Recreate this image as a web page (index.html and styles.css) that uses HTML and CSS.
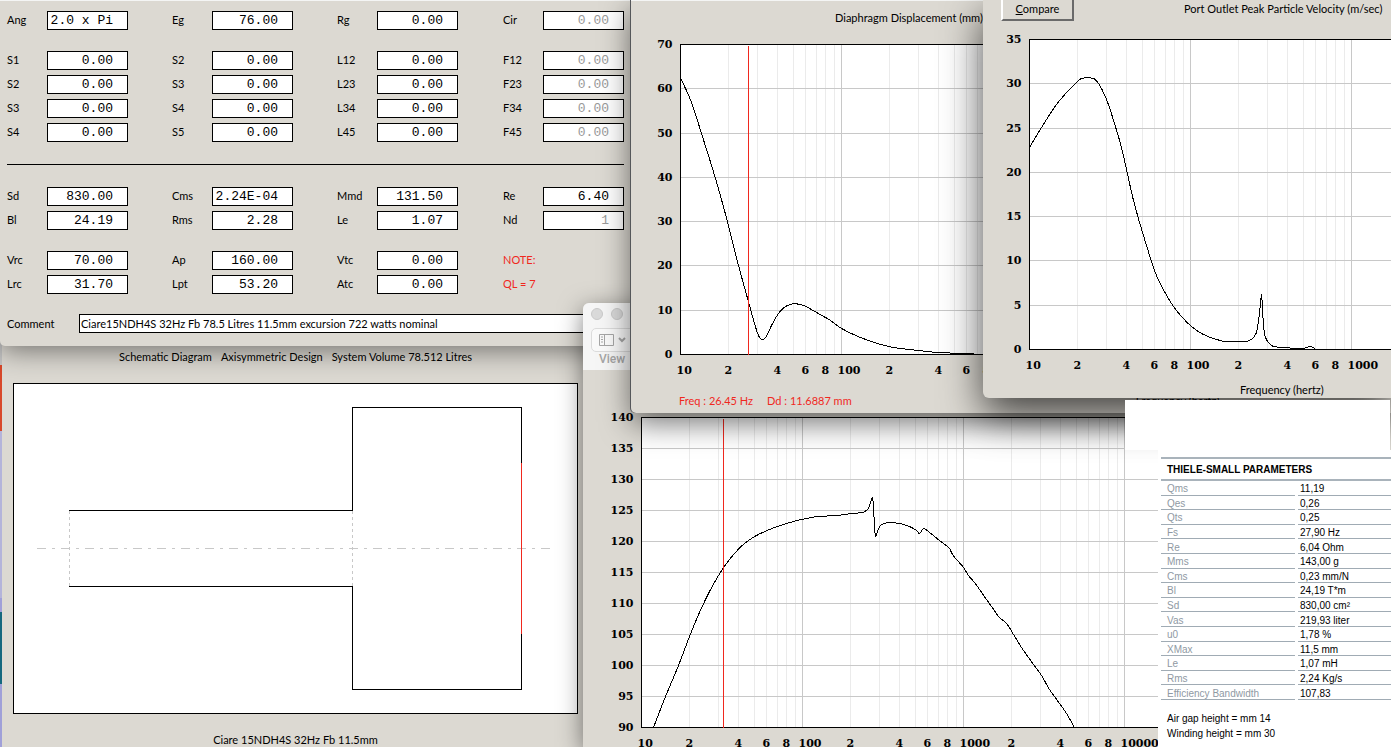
FILE: index.html
```
<!DOCTYPE html>
<html lang="en">

<head>
    <meta charset="UTF-8">
    <meta name="viewport" content="width=device-width, initial-scale=1.0">
    <title>Loudspeaker Simulation</title>
    <link rel="stylesheet" href="styles.css">
</head>

<body>

    <main class="desktop">

        <!-- Schematic diagram -->
        <section class="window schematic">
            <header class="schematic-title">
                <span>Schematic Diagram</span>
                <span>Axisymmetric Design</span>
                <span>System Volume 78.512 Litres</span>
            </header>
            <svg class="schematic-canvas" viewBox="0 0 563 329" shape-rendering="crispEdges">
                <path class="guide axis" d="M23 164.5H536" />
                <path class="guide" d="M55.5 127V202M338.5 127V202" />
                <path class="wall" d="M55 126.500H338.500V23.500H507.500V79M55 202.500H338.500V305.500H507.500V250" />
                <path class="driver" d="M507.500 79V250" />
            </svg>
            <p class="schematic-caption">Ciare 15NDH4S 32Hz Fb 11.5mm</p>
        </section>

        <!-- Input parameters -->
        <form class="window params">
            <div class="field-grid">
                <div class="field"><label for="ang">Ang</label><input type="text" id="ang" value="2.0 x Pi"></div>
                <div class="field"><label for="eg">Eg</label><input type="text" id="eg" value="76.00"></div>
                <div class="field"><label for="rg">Rg</label><input type="text" id="rg" value="0.00"></div>
                <div class="field"><label for="cir">Cir</label><input type="text" id="cir" value="0.00" disabled></div>
            </div>
            <div class="field-grid">
                <div class="field"><label for="s1">S1</label><input type="text" id="s1" value="0.00"></div>
                <div class="field"><label for="s2">S2</label><input type="text" id="s2" value="0.00"></div>
                <div class="field"><label for="l12">L12</label><input type="text" id="l12" value="0.00"></div>
                <div class="field"><label for="f12">F12</label><input type="text" id="f12" value="0.00" disabled></div>
                <div class="field"><label for="s2b">S2</label><input type="text" id="s2b" value="0.00"></div>
                <div class="field"><label for="s3">S3</label><input type="text" id="s3" value="0.00"></div>
                <div class="field"><label for="l23">L23</label><input type="text" id="l23" value="0.00"></div>
                <div class="field"><label for="f23">F23</label><input type="text" id="f23" value="0.00" disabled></div>
                <div class="field"><label for="s3b">S3</label><input type="text" id="s3b" value="0.00"></div>
                <div class="field"><label for="s4">S4</label><input type="text" id="s4" value="0.00"></div>
                <div class="field"><label for="l34">L34</label><input type="text" id="l34" value="0.00"></div>
                <div class="field"><label for="f34">F34</label><input type="text" id="f34" value="0.00" disabled></div>
                <div class="field"><label for="s4b">S4</label><input type="text" id="s4b" value="0.00"></div>
                <div class="field"><label for="s5">S5</label><input type="text" id="s5" value="0.00"></div>
                <div class="field"><label for="l45">L45</label><input type="text" id="l45" value="0.00"></div>
                <div class="field"><label for="f45">F45</label><input type="text" id="f45" value="0.00" disabled></div>
            </div>
            <hr>
            <div class="field-grid">
                <div class="field"><label for="sd">Sd</label><input type="text" id="sd" value="830.00"></div>
                <div class="field"><label for="cms">Cms</label><input type="text" id="cms" value="2.24E-04"></div>
                <div class="field"><label for="mmd">Mmd</label><input type="text" id="mmd" value="131.50"></div>
                <div class="field"><label for="re">Re</label><input type="text" id="re" value="6.40"></div>
                <div class="field"><label for="bl">Bl</label><input type="text" id="bl" value="24.19"></div>
                <div class="field"><label for="rms">Rms</label><input type="text" id="rms" value="2.28"></div>
                <div class="field"><label for="le">Le</label><input type="text" id="le" value="1.07"></div>
                <div class="field"><label for="nd">Nd</label><input type="text" id="nd" value="1" disabled></div>
            </div>
            <div class="field-grid">
                <div class="field"><label for="vrc">Vrc</label><input type="text" id="vrc" value="70.00"></div>
                <div class="field"><label for="ap">Ap</label><input type="text" id="ap" value="160.00"></div>
                <div class="field"><label for="vtc">Vtc</label><input type="text" id="vtc" value="0.00"></div>
                <div class="field note">NOTE:</div>
                <div class="field"><label for="lrc">Lrc</label><input type="text" id="lrc" value="31.70"></div>
                <div class="field"><label for="lpt">Lpt</label><input type="text" id="lpt" value="53.20"></div>
                <div class="field"><label for="atc">Atc</label><input type="text" id="atc" value="0.00"></div>
                <div class="field note">QL = 7</div>
            </div>
            <div class="comment">
                <label for="comment">Comment</label>
                <input type="text" id="comment" value="Ciare15NDH4S 32Hz Fb 78.5 Litres 11.5mm excursion 722 watts nominal">
            </div>
        </form>

        <!-- Preview window with the SPL chart in front -->
        <section class="window preview">
            <div class="toolbar">
                <div class="lights"><i></i><i></i></div>
                <button type="button" id="view-btn" class="view-btn">
                    <svg width="30" height="14" viewBox="0 0 30 14">
                        <path d="M.5 1.500H14.500V12.500H.5ZM5.500 1.500V12.500M2 4H4M2 6.500H4M2 9H4" />
                        <path class="chevron" d="M20 5L23 8L26 5" />
                    </svg>
                </button>
                <label for="view-btn">View</label>
            </div>
            <svg class="chart" id="spl"></svg>
        </section>

        <!-- Diaphragm displacement -->
        <section class="window displacement">
            <header class="chart-head">
                <h2>Diaphragm Displacement (mm)</h2>
            </header>
            <svg class="chart" id="disp"></svg>
            <footer class="readout">
                <span>Freq : 26.45 Hz</span>
                <span>Dd : 11.6887 mm</span>
                <span class="axis-name">Frequency (hertz)</span>
            </footer>
        </section>

        <!-- Port velocity -->
        <section class="window velocity">
            <header class="chart-head">
                <button type="button" class="compare-btn"><u>C</u>ompare</button>
                <h2>Port Outlet Peak Particle Velocity (m/sec)</h2>
            </header>
            <svg class="chart" id="vel"></svg>
            <footer class="axis-name">Frequency (hertz)</footer>
        </section>

        <div class="blank-note"></div>

        <!-- Driver datasheet -->
        <section class="datasheet">
            <h3>THIELE-SMALL PARAMETERS</h3>
            <table>
                <tr><th>Qms</th><td>11,19</td></tr>
                <tr><th>Qes</th><td>0,26</td></tr>
                <tr><th>Qts</th><td>0,25</td></tr>
                <tr><th>Fs</th><td>27,90 Hz</td></tr>
                <tr><th>Re</th><td>6,04 Ohm</td></tr>
                <tr><th>Mms</th><td>143,00 g</td></tr>
                <tr><th>Cms</th><td>0,23 mm/N</td></tr>
                <tr><th>Bl</th><td>24,19 T*m</td></tr>
                <tr><th>Sd</th><td>830,00 cm²</td></tr>
                <tr><th>Vas</th><td>219,93 liter</td></tr>
                <tr><th>u0</th><td>1,78 %</td></tr>
                <tr><th>XMax</th><td>11,5 mm</td></tr>
                <tr><th>Le</th><td>1,07 mH</td></tr>
                <tr><th>Rms</th><td>2,24 Kg/s</td></tr>
                <tr><th>Efficiency Bandwidth</th><td>107,83</td></tr>
            </table>
            <p>Air gap height = mm 14</p>
            <p>Winding height = mm 30</p>
        </section>

    </main>

    <script>
        var DECADE = 161;
        var HEIGHT = 310;

        function add(svg, name, attrs, text) {
            var el = document.createElementNS('http://www.w3.org/2000/svg', name);
            for (var key in attrs) {
                el.setAttribute(key, attrs[key]);
            }
            if (text !== undefined) {
                el.textContent = text;
            }
            svg.appendChild(el);
        }

        // Monotone cubic through the points, so peaks do not overshoot
        function smoothPath(points) {
            var p = points.split(' ').map(function (s) { return s.split(',').map(Number); });
            var slopes = [];
            var tangents = [];
            var i;
            for (i = 0; i < p.length - 1; i++) {
                slopes.push((p[i + 1][1] - p[i][1]) / (p[i + 1][0] - p[i][0]));
            }
            for (i = 0; i < p.length; i++) {
                var a = slopes[Math.max(i - 1, 0)];
                var b = slopes[Math.min(i, slopes.length - 1)];
                tangents.push(a * b <= 0 ? 0 : 2 * a * b / (a + b));
            }
            var d = 'M' + p[0];
            for (i = 0; i < p.length - 1; i++) {
                var h = (p[i + 1][0] - p[i][0]) / 3;
                d += 'C' + [p[i][0] + h, p[i][1] + h * tangents[i],
                    p[i + 1][0] - h, p[i + 1][1] - h * tangents[i + 1],
                    p[i + 1][0], p[i + 1][1]].join(' ');
            }
            return d;
        }

        // Log frequency axis from 10 Hz, linear vertical axis from min to max
        function drawChart(id, opt) {
            var svg = document.getElementById(id);
            var x0 = opt.left + 0.5;
            var y0 = opt.top + 0.5;
            var width = DECADE * 4;

            add(svg, 'rect', { x: x0, y: y0, width: width, height: HEIGHT, fill: '#fff' });

            for (var d = 0; d < opt.decades; d++) {
                for (var n = 1; n < 10; n++) {
                    var x = x0 + Math.round(DECADE * (d + Math.log10(n)));
                    if (d > 0 || n > 1) {
                        add(svg, 'path', { d: 'M' + x + ' ' + y0 + 'v' + HEIGHT, 'class': n === 1 ? 'major' : 'minor' });
                    }
                    if (n === 1 || n === 2 || n === 4 || n === 6 || n === 8) {
                        var label = n === 1 ? Math.pow(10, d + 1) : n;
                        if (x < svg.clientWidth) {
                            add(svg, 'text', { x: x - 4, y: y0 + HEIGHT + 19, 'class': 'tick' }, label);
                        }
                    }
                }
            }

            var count = (opt.max - opt.min) / opt.step;
            for (var i = 0; i <= count; i++) {
                var y = y0 + Math.round(HEIGHT * i / count);
                if (i > 0 && i < count) {
                    add(svg, 'path', { d: 'M' + x0 + ' ' + y + 'h' + width, 'class': 'major' });
                }
                add(svg, 'text', { x: x0 - 8, y: y + 3, 'class': 'tick tick-y' }, opt.max - i * opt.step);
            }

            add(svg, 'rect', { x: x0, y: y0, width: width, height: HEIGHT, 'class': 'frame' });
            add(svg, 'path', { d: smoothPath(opt.points), 'class': 'curve', transform: 'translate(' + x0 + ' ' + y0 + ')' });
            if (opt.cursor) {
                add(svg, 'path', { d: 'M' + (x0 + opt.cursor) + ' ' + (y0 + 1) + 'v' + (HEIGHT - 1), 'class': 'cursor' });
            }
        }

        drawChart('disp', {
            left: 49, top: 10, min: 0, max: 70, step: 10, decades: 2, cursor: 68,
            points: '0,33 11,58 21,89 35,134 44,166 58,221 69,261 74,279 78,291 80,294 82,295 85,293 91,281 98,269 105,262 110,260 114,259 119,260 123,261 136,268 150,276 161,284 180,293 197,299 213,303 238,306 258,308 283,309 303,310'
        });

        drawChart('vel', {
            left: 46, top: 10, min: 0, max: 35, step: 5, decades: 3,
            points: '0,108 12,88 27,65 39,51 47,43 52,39 58,38 64,39 69,44 77,60 85,84 92,108 97,130 104,161 117,206 127,236 136,254 144,267 152,277 162,287 172,294 184,299 197,302 209,302 217,302 223,299 227,293 229,281 231,264 232,255 233,269 234,286 236,298 239,303 244,307 252,308 274,309 280,307 286,309'
        });

        drawChart('spl', {
            left: 58, top: 47, min: 90, max: 140, step: 5, decades: 4, cursor: 82,
            points: '12,310 24,279 37,248 48,219 58,195 68,174 77,158 85,146 93,136 103,126 115,118 128,112 142,107 160,102 177,99 195,98 210,96 221,95 226,92 228,88 230,82 231,80 232,90 233,109 234,119 237,111 240,107 248,105 258,106 268,109 275,113 278,116 282,111 288,115 298,123 308,131 311,137 322,150 327,158 333,165 345,182 350,189 358,200 365,206 372,217 380,230 392,247 400,258 408,272 413,279 425,296 433,310'
        });
    </script>

</body>

</html>
```
FILE: styles.css
```
* {
    box-sizing: border-box;
}

body {
    margin: 0;
    font-family: Lato, "Liberation Sans", Arial, sans-serif;
    font-size: 11px;
    line-height: 14px;
    color: #000;
}

h2,
h3,
p {
    margin: 0;
    font-size: inherit;
    font-weight: normal;
}

.desktop {
    position: relative;
    height: 100vh;
    overflow: hidden;
    background: linear-gradient(#c4c4c4 365px, #d8482a 365px, #d8482a 431px, #b4b4da 431px, #b4b4da 598px, #a0a0d8 598px, #a0a0d8 612px, #15687f 612px, #15687f 684px, #a0a0d8 684px);
}

.window {
    position: absolute;
    background-color: #dcd9d2;
}

/* Schematic */
.schematic {
    left: 2px;
    top: 340px;
    bottom: 0;
    width: 581px;
    padding: 10px 5px 0 11px;
    display: flex;
    flex-direction: column;
}

.schematic-title {
    display: flex;
    justify-content: center;
    gap: 9px;
}

.schematic-canvas {
    width: 565px;
    height: 331px;
    margin: 19px 0;
    background-color: #fff;
    border: 1px solid #000;
}

.schematic-caption {
    text-align: center;
}

.schematic-canvas path {
    fill: none;
}

.wall {
    stroke: #000;
}

.driver {
    stroke: #f0281e;
}

.guide {
    stroke: #c8c8c8;
    stroke-dasharray: 3 3;
}

.guide.axis {
    stroke-dasharray: 9 6 3 6;
}

/* Parameters */
.params {
    left: 0;
    top: 0;
    width: 630px;
    height: 346px;
    padding: 10px 6px 0 7px;
    border-top: 1px solid #f4f5f4;
    border-bottom-left-radius: 5px;
    display: flex;
    flex-direction: column;
    box-shadow: 0 4px 28px rgba(0, 0, 0, 0.5);
}

.field-grid {
    display: grid;
    grid-template-columns: 121px 121px 122px 121px;
    gap: 5px 44px;
    margin-bottom: 21px;
}

.field {
    display: flex;
    height: 19px;
    line-height: 18px;
}

.field label {
    width: 40px;
}

.field input {
    width: 81px;
    height: 19px;
    padding: 0 14px 0 0;
    border: 1px solid #000;
    background-color: #fff;
    color: #000;
    font-family: "Liberation Mono", monospace;
    font-size: 13px;
    text-align: right;
}

.field input:disabled {
    color: #999;
}

.note {
    color: #f0281e;
}

.params hr {
    width: 100%;
    margin: 1px 0 22px;
    border: 0;
    border-top: 1px solid #000;
}

.comment {
    display: flex;
    align-items: center;
    margin-top: -1px;
}

.comment label {
    width: 72px;
}

.comment input {
    flex: 1;
    height: 19px;
    padding: 0 1px;
    border: 1px solid #000;
    font: inherit;
}

/* Preview toolbar and SPL chart */
.preview {
    left: 583px;
    top: 303px;
    right: 0;
    bottom: 0;
    border-top-left-radius: 6px;
    box-shadow: 0 6px 24px rgba(0, 0, 0, 0.5);
}

.toolbar {
    height: 67px;
    padding: 5px 8px 0;
    background-color: #f6f6f6;
    border-top-left-radius: 6px;
    font-family: Roboto, sans-serif;
    font-size: 12px;
    font-weight: 500;
    color: #a6a6a6;
}

.toolbar label {
    display: block;
    padding-left: 8px;
}

.lights {
    display: flex;
    gap: 8px;
    height: 20px;
}

.lights i {
    width: 12px;
    height: 12px;
    border: 1px solid #cacaca;
    border-radius: 50%;
    background-color: #dadada;
}

.view-btn {
    display: flex;
    align-items: center;
    width: 60px;
    height: 24px;
    padding: 0 7px;
    border: 1px solid #dcdcdc;
    border-radius: 5px;
    background-color: #fafafa;
}

.view-btn path {
    fill: none;
    stroke: #a6a6a6;
}

.view-btn .chevron {
    stroke-width: 2;
}

/* Chart windows */
.displacement {
    left: 631px;
    top: 0;
    right: 0;
    height: 413px;
    border-top: 1px solid #f4f5f4;
    border-bottom-left-radius: 5px;
    box-shadow: -1px 0 0 #55575a, 0 10px 30px rgba(0, 0, 0, 0.55);
}

.velocity {
    left: 983px;
    top: 0;
    right: 0;
    height: 398px;
    border-bottom-left-radius: 6px;
    box-shadow: 0 16px 40px rgba(0, 0, 0, 0.7);
}

.chart-head {
    display: flex;
    overflow: hidden;
    white-space: nowrap;
}

.displacement .chart-head {
    height: 33px;
    padding: 10px 0 0 204px;
}

.velocity .chart-head {
    gap: 110px;
    height: 29px;
    padding-left: 18px;
}

.velocity h2 {
    padding-top: 2px;
}

.compare-btn {
    width: 73px;
    height: 21px;
    padding: 0 0 1px;
    border: 2px solid;
    border-color: #fff #6a6a6a #6a6a6a #fff;
    border-top: 0;
    background-color: #dcd9d2;
    font: inherit;
}

.chart {
    display: block;
    width: 100%;
    height: 350px;
    shape-rendering: crispEdges;
}

#spl {
    height: 377px;
}

.chart path,
.frame {
    fill: none;
}

.chart .major {
    stroke: #c8c8c8;
}

.chart .minor {
    stroke: #ebebeb;
}

.frame,
.curve {
    stroke: #000;
}

.cursor {
    stroke: #f0281e;
}

.tick {
    font-family: "DejaVu Serif", serif;
    font-size: 11px;
    font-weight: bold;
}

.tick-y {
    text-anchor: end;
}

.readout {
    display: flex;
    gap: 14px;
    margin-top: 10px;
    padding-left: 48px;
    color: #f0281e;
}

.readout .axis-name {
    margin-left: 270px;
    color: #000;
}

.velocity footer {
    margin-top: 4px;
    padding-left: 257px;
}

/* Datasheet */
.blank-note {
    position: absolute;
    left: 1125px;
    top: 400px;
    right: 1px;
    height: 50px;
    background-color: #fff;
}

.datasheet {
    position: absolute;
    left: 1158px;
    top: 450px;
    right: 0;
    bottom: 0;
    padding: 7px 0 0 3px;
    overflow: hidden;
    background-color: #fff;
    font-family: "Liberation Sans", Arial, sans-serif;
    font-size: 10px;
}

.datasheet h3 {
    height: 24px;
    padding: 4px 6px;
    border-top: 2px solid #a9b3bb;
    border-bottom: 2px solid #a9b3bb;
    font-weight: bold;
}

.datasheet table {
    width: calc(100% + 6px);
    height: 219px;
    margin: 0 -3px 11px;
    border-collapse: separate;
    border-spacing: 3px 0;
    table-layout: fixed;
    line-height: 11px;
}

.datasheet th {
    width: 134px;
    padding: 2px 6px 0;
    border-bottom: 1px solid #a0abb4;
    color: #8f99a3;
    font-weight: normal;
    text-align: left;
}

.datasheet td {
    padding: 2px 2px 0;
    border-bottom: 1px solid #a0abb4;
}

.datasheet p {
    padding-left: 6px;
    line-height: 15px;
}
```
